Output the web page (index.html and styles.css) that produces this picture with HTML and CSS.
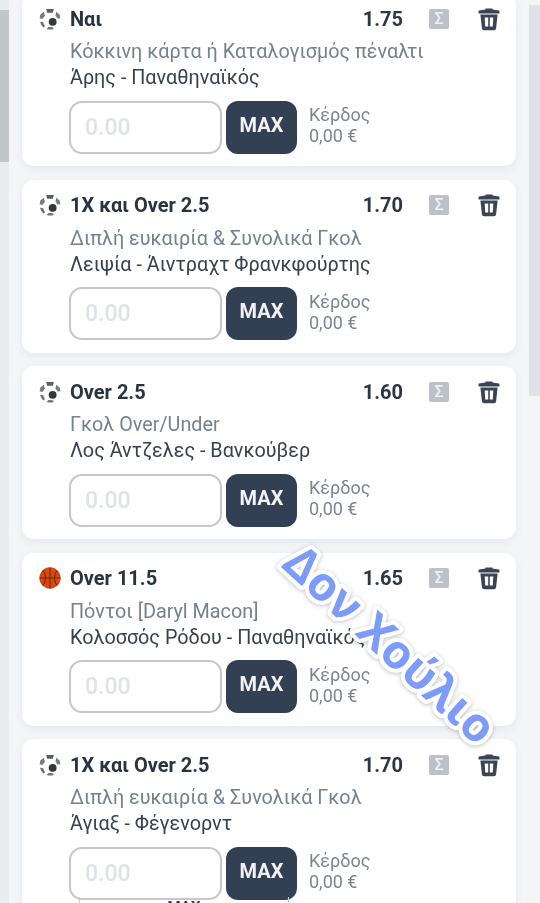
FILE: index.html
```html
<!DOCTYPE html>
<html lang="el">
<head>
<meta charset="utf-8">
<title>Δελτίο</title>
<link rel="stylesheet" href="styles.css">
</head>
<body>
<svg class="defs" width="0" height="0" aria-hidden="true">
  <defs>
    <symbol id="ball" viewBox="0 0 20 20">
      <circle cx="10" cy="10" r="9.4" fill="#fff"/>
      <path d="M6.500 1 L13.500 1 L12.600 4.400 L7.400 4.400Z" fill="#5b5f67"/>
      <path d="M1.200 6 L4.400 3.400 L5.400 7 L3 10 L.6 9.400Z" fill="#777b82"/>
      <path d="M15.600 3.400 L18.800 6 L19.400 9.400 L17 9.600 L15 7Z" fill="#777b82"/>
      <circle cx="12.400" cy="12.600" r="3.600" fill="#33373f"/>
      <path d="M1 12.400 L3.600 12.800 L5.400 16.600 L4 17.800 A9.400 9.400 0 0 1 1 12.400Z" fill="#6f737a"/>
      <path d="M7 19 L8.600 17.200 L12.600 17.600 L13.400 19 A9.400 9.400 0 0 1 7 19Z" fill="#6f737a"/>
    </symbol>
    <symbol id="basket" viewBox="0 0 24 24">
      <circle cx="12" cy="12" r="11.600" fill="#d9480f"/>
      <path d="M12 .6V23.400M.6 12H23.400M4 4C8 7.500 8 16.500 4 20M20 4C16 7.500 16 16.500 20 20" fill="none" stroke="#6a2a0e" stroke-width="1.100"/>
    </symbol>
    <symbol id="trash" viewBox="0 0 24 24">
      <path d="M8.500 2.500V1.500h7v1l6.500 1a1.500 1.500 0 0 1 .5 1.200V6.500H1.500V4.700A1.500 1.500 0 0 1 2 3.500Z" fill="#3b4456"/>
      <path d="M3.400 7.500h17.200l-1.500 13.700a2.200 2.200 0 0 1-2.200 2H7.100a2.200 2.200 0 0 1-2.200-2ZM7.700 10.500l.5 9h3v-9ZM12.800 10.500v9h3l.5-9Z" fill="#3b4456" fill-rule="evenodd"/>
    </symbol>
  </defs>
</svg>

<div class="page">
  <aside class="rail"><div class="rail-thumb"></div></aside>

  <main class="list">
    <article class="card">
      <div class="head">
        <svg class="sport"><use href="#ball"/></svg>
        <span class="pick">Ναι</span>
        <span class="odds">1.75</span>
        <span class="sigma">Σ</span>
        <svg class="trash"><use href="#trash"/></svg>
      </div>
      <p class="market">Κόκκινη κάρτα ή Καταλογισμός πέναλτι</p>
      <p class="match">Άρης - Παναθηναϊκός</p>
      <div class="stake">
        <div class="amount">0.00</div>
        <button class="max">MAX</button>
        <div class="win"><span>Κέρδος</span><span>0,00 €</span></div>
      </div>
    </article>

    <article class="card">
      <div class="head">
        <svg class="sport"><use href="#ball"/></svg>
        <span class="pick">1X και Over 2.5</span>
        <span class="odds">1.70</span>
        <span class="sigma">Σ</span>
        <svg class="trash"><use href="#trash"/></svg>
      </div>
      <p class="market">Διπλή ευκαιρία &amp; Συνολικά Γκολ</p>
      <p class="match">Λειψία - Άιντραχτ Φρανκφούρτης</p>
      <div class="stake">
        <div class="amount">0.00</div>
        <button class="max">MAX</button>
        <div class="win"><span>Κέρδος</span><span>0,00 €</span></div>
      </div>
    </article>

    <article class="card">
      <div class="head">
        <svg class="sport"><use href="#ball"/></svg>
        <span class="pick">Over 2.5</span>
        <span class="odds">1.60</span>
        <span class="sigma">Σ</span>
        <svg class="trash"><use href="#trash"/></svg>
      </div>
      <p class="market">Γκολ Over/Under</p>
      <p class="match">Λος Άντζελες - Βανκούβερ</p>
      <div class="stake">
        <div class="amount">0.00</div>
        <button class="max">MAX</button>
        <div class="win"><span>Κέρδος</span><span>0,00 €</span></div>
      </div>
    </article>

    <article class="card">
      <div class="head">
        <svg class="sport"><use href="#basket"/></svg>
        <span class="pick">Over 11.5</span>
        <span class="odds">1.65</span>
        <span class="sigma">Σ</span>
        <svg class="trash"><use href="#trash"/></svg>
      </div>
      <p class="market">Πόντοι [Daryl Macon]</p>
      <p class="match">Κολοσσός Ρόδου - Παναθηναϊκός</p>
      <div class="stake">
        <div class="amount">0.00</div>
        <button class="max">MAX</button>
        <div class="win"><span>Κέρδος</span><span>0,00 €</span></div>
      </div>
    </article>

    <article class="card">
      <div class="head">
        <svg class="sport"><use href="#ball"/></svg>
        <span class="pick">1X και Over 2.5</span>
        <span class="odds">1.70</span>
        <span class="sigma">Σ</span>
        <svg class="trash"><use href="#trash"/></svg>
      </div>
      <p class="market">Διπλή ευκαιρία &amp; Συνολικά Γκολ</p>
      <p class="match">Άγιαξ - Φέγενορντ</p>
      <div class="stake">
        <div class="amount">0.00</div>
        <button class="max">MAX</button>
        <div class="win"><span>Κέρδος</span><span>0,00 €</span></div>
      </div>
      <div class="peek">MAX</div>
    </article>
  </main>

  <aside class="scrollbar"><div class="scroll-thumb"></div></aside>
</div>

<svg class="watermark" viewBox="0 0 540 903" width="540" height="903">
  <defs>
    <linearGradient id="wm" gradientUnits="userSpaceOnUse" x1="285" y1="545" x2="490" y2="745">
      <stop offset="0" stop-color="#7d9bfb"/>
      <stop offset="1" stop-color="#4ba6f0"/>
    </linearGradient>
  </defs>
  <text class="wm-text" transform="translate(280 566) rotate(42.500)" fill="url(#wm)">Δον Χούλιο</text>
</svg>
</body>
</html>
```

FILE: styles.css
```css
* { box-sizing: border-box; }

html, body {
  margin: 0;
  height: 903px;
  overflow: hidden;
  background: #f3f5f7;
}

body {
  position: relative;
  width: 540px;
  font-family: "Roboto", "Noto Sans", sans-serif;
  color: #2f3542;
}

.defs { position: absolute; }

.page {
  display: flex;
  height: 903px;
  filter: blur(0.55px);
}

.rail {
  width: 22px;
  flex: none;
  padding-top: 10px;
  background: linear-gradient(90deg, #e9edf0 9px, #f3f5f7 9px);
}

.rail-thumb {
  width: 9px;
  height: 152px;
  background: #c1c7c8;
}

.list {
  width: 494px;
  flex: none;
  margin-top: -7px;
  display: flex;
  flex-direction: column;
  gap: 13.500px;
}

.card {
  position: relative;
  flex: none;
  height: 173px;
  padding: 0 15px 0 17px;
  background: #fff;
  border-radius: 12px;
  box-shadow: 0 3px 8px rgba(60, 70, 90, 0.07);
}

.head {
  display: flex;
  align-items: center;
  height: 26px;
  margin-top: 12.500px;
}

.sport {
  width: 22px;
  height: 22px;
  flex: none;
  margin-right: 9px;
}

.pick {
  flex: 1;
  font-size: 20px;
  font-weight: 700;
  color: #2b3240;
  white-space: nowrap;
}

.odds {
  width: 42px;
  font-size: 20px;
  font-weight: 700;
  text-align: right;
  color: #2f3542;
}

.sigma {
  width: 20px;
  height: 20px;
  flex: none;
  margin-left: 26px;
  margin-right: 28px;
  border-radius: 2px;
  background: #bcc0c8;
  color: #eef0f2;
  font-size: 16px;
  font-weight: 500;
  line-height: 20px;
  text-align: center;
}

.trash {
  width: 24px;
  height: 24px;
  flex: none;
}

.market,
.match {
  margin: 0;
  padding-left: 31px;
  font-size: 19.800px;
  line-height: 26px;
  white-space: nowrap;
}

.market {
  margin-top: 7.500px;
  color: #77808f;
}

.match {
  color: #3a414e;
}

.stake {
  display: flex;
  align-items: center;
  gap: 4px;
  margin: 9.500px 0 0 30px;
  height: 53px;
}

.amount {
  width: 153px;
  height: 53px;
  padding-left: 14px;
  border: 2px solid #c4c7cb;
  border-radius: 13px;
  background: #fff;
  color: #dfe3e8;
  font-size: 23px;
  font-weight: 500;
  line-height: 49px;
}

.max {
  width: 71px;
  height: 53px;
  padding: 0 0 5px;
  border: 0;
  border-radius: 12px;
  background: #333f52;
  color: #f2f3f5;
  font-family: inherit;
  font-size: 20px;
  font-weight: 700;
}

.win {
  display: flex;
  flex-direction: column;
  margin: -4px 0 0 8px;
  font-size: 18px;
  line-height: 21px;
  color: #7d8592;
}

.peek {
  position: absolute;
  left: 57px;
  top: 158px;
  width: 210px;
  height: 14px;
  border: 1px solid #c4c7cb;
  border-top: 0;
  font-size: 15px;
  font-weight: 700;
  line-height: 21px;
  text-align: center;
  color: #333f52;
}

.scrollbar {
  width: 24px;
  flex: none;
  padding: 5px 0 0 13px;
}

.scroll-thumb {
  width: 11px;
  height: 391px;
  background: #dfe2e7;
}

.watermark {
  position: absolute;
  top: 0;
  left: 0;
  pointer-events: none;
  filter: blur(0.4px) drop-shadow(0 1px 2px rgba(40, 50, 70, 0.3));
}

.wm-text {
  font-family: "Open Sans", sans-serif;
  font-size: 47px;
  font-weight: 700;
  stroke: #fff;
  stroke-width: 8px;
  stroke-linejoin: round;
  paint-order: stroke;
}
```
